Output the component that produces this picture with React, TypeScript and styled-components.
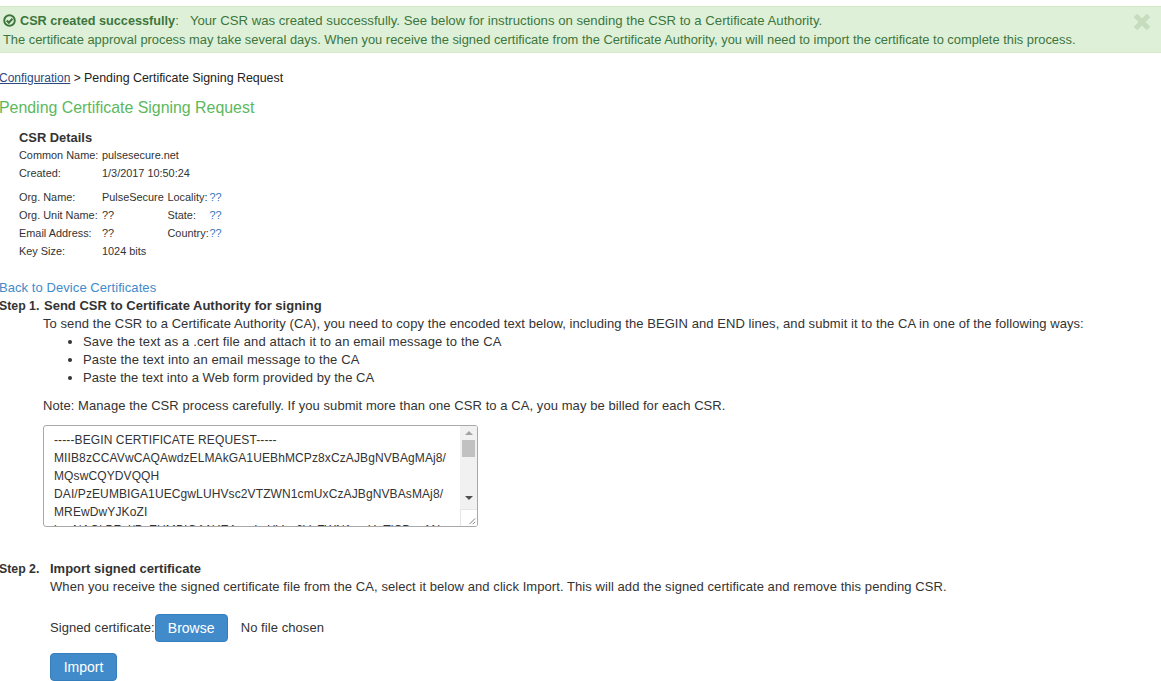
import { createGlobalStyle } from "styled-components";
import styled from "styled-components";

const GlobalStyle = createGlobalStyle`
    html, body { margin: 0; padding: 0; background: #fff; }
    body {
        font-family: "Liberation Sans", Arial, sans-serif;
        font-size: 13px;
        letter-spacing: 0.07px;
        color: #333;
        overflow: hidden;
    }
`
const Page = styled.div`
    width: 1161px;
    height: 681px;
    overflow: hidden;
    padding-top: 6px;
    box-sizing: border-box;
`
const Alert = styled.div`
    position: relative;
    height: 47px;
    box-sizing: border-box;
    padding: 5px 3px;
    background: #dff0d8;
    border: solid 1px #d6e9c6;
    border-width: 1px 0;
    color: #3c763d;
    font-size: 12.88px;
    letter-spacing: 0;
    line-height: 18.5px;
`
const AlertTitle = styled.strong`
    font-size: 12.7px;
`
const AlertLead = styled.span`
    margin-left: 4px;
    font-size: 13.18px;
`
const AlertIcon = styled.svg`
    width: 13px;
    height: 13px;
    vertical-align: -2px;
    margin-right: 4px;
`
const CloseMark = styled.svg`
    position: absolute;
    top: 6px;
    right: 10px;
    width: 18px;
    height: 18px;
`
const Content = styled.div`
    margin-left: -1px;
`
const Breadcrumb = styled.div`
    margin-top: 18px;
    font-size: 12px;
    letter-spacing: 0;
    line-height: 14px;
    color: #222;
    & a { color: #2a4a7f; text-decoration: underline; }
`
const CrumbCurrent = styled.span`
    font-size: 12.4px;
`
const Title = styled.h2`
    margin: 14px 0 0;
    font-size: 15.9px;
    font-weight: normal;
    letter-spacing: 0;
    line-height: 18px;
    color: #5cb85c;
`
const Details = styled.div`
    margin: 13px 0 0 20px;
    font-size: 10.9px;
    letter-spacing: 0;
`
const DetailsHead = styled.div`
    font-size: 12.9px;
    font-weight: bold;
    line-height: 16px;
`
const DetailRow = styled.div<{ $gap?: number }>`
    display: grid;
    grid-template-columns: 83px 65.5px 42px auto;
    height: 18px;
    line-height: 18px;
    margin-top: ${p => p.$gap ?? 0}px;
    white-space: nowrap;
`
const Unknown = styled.span`
    color: #337ab7;
`
const BackLink = styled.a`
    display: block;
    margin-top: 19px;
    line-height: 18px;
    color: #428bca;
    text-decoration: none;
`
const StepHead = styled.div<{ $top: number }>`
    display: flex;
    margin-top: ${p => p.$top}px;
    line-height: 18px;
    font-weight: bold;
    letter-spacing: 0;
`
const StepLabel = styled.span<{ $width: number }>`
    width: ${p => p.$width}px;
    font-size: 12.3px;
`
const StepBody = styled.div<{ $indent: number }>`
    margin-left: ${p => p.$indent}px;
    line-height: 18px;
`
const Bullets = styled.ul`
    margin: 0;
    padding: 0 0 0 40px;
`
const Bullet = styled.li<{ $spacing?: number }>`
    letter-spacing: ${p => p.$spacing ?? 0.07}px;
`
const Note = styled.p`
    margin: 10px 0 0;
`
const CsrBox = styled.div`
    display: flex;
    width: 435px;
    height: 102px;
    margin-top: 10px;
    box-sizing: border-box;
    border: solid 1px #a9a9a9;
    border-radius: 3px;
    overflow: hidden;
`
const CsrText = styled.pre`
    flex: 1;
    margin: 0;
    padding: 5px 10px;
    font: inherit;
    font-size: 12px;
    letter-spacing: 0.11px;
    line-height: 18px;
    color: #333;
    overflow: hidden;
`
const ScrollBar = styled.div`
    display: flex;
    flex-direction: column;
    align-items: center;
    width: 17px;
    flex: none;
    background: #f1f1f1;
`
const ArrowUp = styled.span`
    margin-top: 5px;
    border: solid 4px transparent;
    border-top: 0;
    border-bottom: solid 4px #a3a3a3;
`
const Thumb = styled.span`
    width: 13px;
    height: 17px;
    margin-top: 5px;
    background: #c1c1c1;
`
const ArrowDown = styled.span`
    margin-top: 39px;
    border: solid 4px transparent;
    border-bottom: 0;
    border-top: solid 4px #505050;
`
const Resizer = styled.svg`
    margin-top: auto;
    width: 17px;
    height: 17px;
    background: #fff;
    border-left: solid 1px #e6e6e6;
    border-top: solid 1px #e6e6e6;
    box-sizing: border-box;
`
const FileRow = styled.div`
    display: flex;
    align-items: center;
    margin-top: 18px;
    height: 28px;
`
const BlueButton = styled.button<{ $width: number }>`
    width: ${p => p.$width}px;
    height: 28px;
    padding: 0;
    background: #428bca;
    border: solid 1px #357ebd;
    border-radius: 4px;
    color: #fff;
    font-family: inherit;
    font-size: 14px;
`
const FileName = styled.span`
    margin-left: 13px;
`
const ImportButton = styled(BlueButton)`
    display: block;
    margin-top: 11px;
`

const csrLines = `-----BEGIN CERTIFICATE REQUEST-----
MIIB8zCCAVwCAQAwdzELMAkGA1UEBhMCPz8xCzAJBgNVBAgMAj8/
MQswCQYDVQQH
DAI/PzEUMBIGA1UECgwLUHVsc2VTZWN1cmUxCzAJBgNVBAsMAj8/
MREwDwYJKoZI
hvcNAQkBFgI/PzEUMBIGA1UEAwwLcHVsc2VzZWN1cmUuTjCBnzAN`;

function App() {
    return (
        <Page>
            <GlobalStyle />
            <Alert>
                <AlertIcon viewBox="0 0 16 16" fill="none" stroke="#3c763d">
                    <circle cx="8" cy="8" r="6.5" strokeWidth="2.4" />
                    <path d="M4.6 8 7.2 10.6 11.6 5.8" strokeWidth="2.6" />
                </AlertIcon>
                <AlertTitle>CSR created successfully</AlertTitle>:&nbsp; <AlertLead>Your CSR was created successfully. See below for instructions on sending the CSR to a Certificate Authority.</AlertLead>
                <br />
                The certificate approval process may take several days. When you receive the signed certificate from the Certificate Authority, you will need to import the certificate to complete this process.
                <CloseMark viewBox="0 0 18 18" stroke="#c5dcbd" strokeWidth="5">
                    <path d="M2.5 2.5 15.5 15.5M15.5 2.5 2.5 15.5" />
                </CloseMark>
            </Alert>
            <Content>
                <Breadcrumb>
                    <a href="#config">Configuration</a> &gt; <CrumbCurrent>Pending Certificate Signing Request</CrumbCurrent>
                </Breadcrumb>
                <Title>Pending Certificate Signing Request</Title>
                <Details>
                    <DetailsHead>CSR Details</DetailsHead>
                    <DetailRow><span>Common Name:</span><span>pulsesecure.net</span></DetailRow>
                    <DetailRow><span>Created:</span><span>1/3/2017 10:50:24</span></DetailRow>
                    <DetailRow $gap={6}><span>Org. Name:</span><span>PulseSecure</span><span>Locality:</span><Unknown>??</Unknown></DetailRow>
                    <DetailRow><span>Org. Unit Name:</span><span>??</span><span>State:</span><Unknown>??</Unknown></DetailRow>
                    <DetailRow><span>Email Address:</span><span>??</span><span>Country:</span><Unknown>??</Unknown></DetailRow>
                    <DetailRow><span>Key Size:</span><span>1024 bits</span></DetailRow>
                </Details>
                <BackLink href="#back">Back to Device Certificates</BackLink>
                <StepHead $top={0}><StepLabel $width={45}>Step 1.</StepLabel><span>Send CSR to Certificate Authority for signing</span></StepHead>
                <StepBody $indent={44}>
                    To send the CSR to a Certificate Authority (CA), you need to copy the encoded text below, including the BEGIN and END lines, and submit it to the CA in one of the following ways:
                    <Bullets>
                        <Bullet $spacing={0.13}>Save the text as a .cert file and attach it to an email message to the CA</Bullet>
                        <Bullet $spacing={0.12}>Paste the text into an email message to the CA</Bullet>
                        <Bullet $spacing={0.05}>Paste the text into a Web form provided by the CA</Bullet>
                    </Bullets>
                    <Note>Note: Manage the CSR process carefully. If you submit more than one CSR to a CA, you may be billed for each CSR.</Note>
                    <CsrBox>
                        <CsrText>{csrLines}</CsrText>
                        <ScrollBar>
                            <ArrowUp />
                            <Thumb />
                            <ArrowDown />
                            <Resizer viewBox="0 0 17 17" stroke="#777">
                                <path d="M9 15 15 9M12.5 15 15 12.5" />
                            </Resizer>
                        </ScrollBar>
                    </CsrBox>
                </StepBody>
                <StepHead $top={33}><StepLabel $width={51}>Step 2.</StepLabel><span>Import signed certificate</span></StepHead>
                <StepBody $indent={51}>
                    When you receive the signed certificate file from the CA, select it below and click Import. This will add the signed certificate and remove this pending CSR.
                    <FileRow>
                        Signed certificate:
                        <BlueButton $width={73}>Browse</BlueButton>
                        <FileName>No file chosen</FileName>
                    </FileRow>
                    <ImportButton $width={67}>Import</ImportButton>
                </StepBody>
            </Content>
        </Page>
    );
}

export default App;
